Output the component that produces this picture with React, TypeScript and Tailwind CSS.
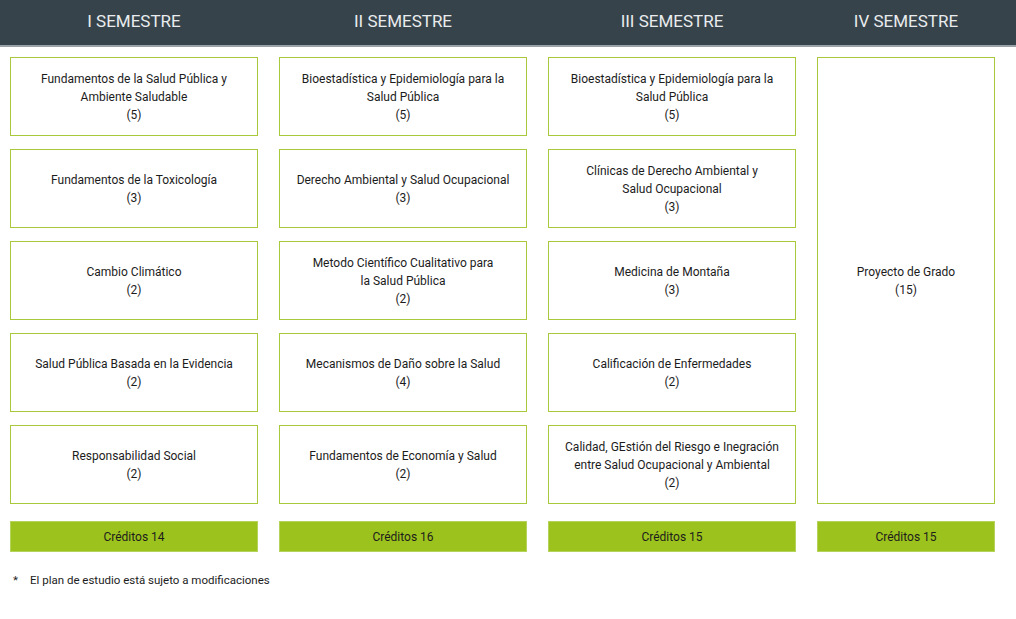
type Course = {
  name: string[];
  credits: number;
};

type Semester = {
  title: string;
  courses: Course[];
  total: number;
};

const semesters: Semester[] = [
  {
    title: "I SEMESTRE",
    total: 14,
    courses: [
      { name: ["Fundamentos de la Salud Pública y", "Ambiente Saludable"], credits: 5 },
      { name: ["Fundamentos de la Toxicología"], credits: 3 },
      { name: ["Cambio Climático"], credits: 2 },
      { name: ["Salud Pública Basada en la Evidencia"], credits: 2 },
      { name: ["Responsabilidad Social"], credits: 2 },
    ],
  },
  {
    title: "II SEMESTRE",
    total: 16,
    courses: [
      { name: ["Bioestadística y Epidemiología para la", "Salud Pública"], credits: 5 },
      { name: ["Derecho Ambiental y Salud Ocupacional"], credits: 3 },
      { name: ["Metodo Científico Cualitativo para", "la Salud Pública"], credits: 2 },
      { name: ["Mecanismos de Daño sobre la Salud"], credits: 4 },
      { name: ["Fundamentos de Economía y Salud"], credits: 2 },
    ],
  },
  {
    title: "III SEMESTRE",
    total: 15,
    courses: [
      { name: ["Bioestadística y Epidemiología para la", "Salud Pública"], credits: 5 },
      { name: ["Clínicas de Derecho Ambiental y", "Salud Ocupacional"], credits: 3 },
      { name: ["Medicina de Montaña"], credits: 3 },
      { name: ["Calificación de Enfermedades"], credits: 2 },
      {
        name: ["Calidad, GEstión del Riesgo e Inegración", "entre Salud Ocupacional y Ambiental"],
        credits: 2,
      },
    ],
  },
  {
    title: "IV SEMESTRE",
    total: 15,
    courses: [{ name: ["Proyecto de Grado"], credits: 15 }],
  },
];

const font = {
  fontFamily: 'Roboto, "Liberation Sans", sans-serif',
};

function CourseCard({ course, tall }: { course: Course; tall?: boolean }) {
  return (
    <div
      className={`flex flex-col items-center justify-center border border-[#a8c93c] bg-white text-center text-[12px] leading-[18px] text-[#1c1c1c] ${
        tall ? "h-[447px]" : "h-[79px]"
      }`}
    >
      {course.name.map((line) => (
        <span key={line}>{line}</span>
      ))}
      <span>({course.credits})</span>
    </div>
  );
}

export default function App() {
  return (
    <div className="h-[619px] w-[1016px] bg-white" style={font}>
      <div className="h-[47px] border-b-2 border-[#98a2a7] bg-[#37434a] px-[10px]">
        <div className="grid h-full grid-cols-[248px_248px_248px_178px] gap-x-[21px]">
          {semesters.map((s) => (
            <div
              key={s.title}
              className="flex items-center justify-center pb-[1px] text-[17px] text-[#e9ecee]"
            >
              {s.title}
            </div>
          ))}
        </div>
      </div>

      <div className="grid grid-cols-[248px_248px_248px_178px] gap-x-[21px] px-[10px] pt-[10px]">
        {semesters.map((s) => (
          <div key={s.title} className="flex flex-col gap-[13px]">
            {s.courses.map((c) => (
              <CourseCard key={c.name.join()} course={c} tall={s.courses.length === 1} />
            ))}
            <div className="mt-[4px] flex h-[31px] items-center justify-center border border-[#b5d35a] bg-[#9cc31d] text-[12px] text-[#1c1c1c]">
              Créditos {s.total}
            </div>
          </div>
        ))}
      </div>

      <div className="mt-[20px] flex items-center pl-[13px] text-[11.5px] text-[#1c1c1c]">
        <span className="w-[17px]">*</span>
        <span>El plan de estudio está sujeto a modificaciones</span>
      </div>
    </div>
  );
}
